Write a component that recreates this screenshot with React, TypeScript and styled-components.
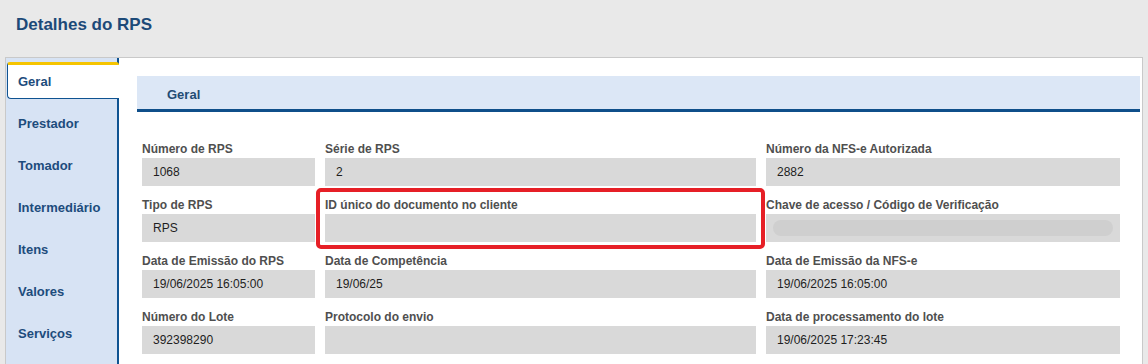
import styled, { createGlobalStyle } from 'styled-components';

type FieldData = {
  label: string;
  value?: string;
  redacted?: boolean;
  highlighted?: boolean;
};

const TABS = ['Geral', 'Prestador', 'Tomador', 'Intermediário', 'Itens', 'Valores', 'Serviços'];

const FIELDS: FieldData[] = [
  { label: 'Número de RPS', value: '1068' },
  { label: 'Série de RPS', value: '2' },
  { label: 'Número da NFS-e Autorizada', value: '2882' },
  { label: 'Tipo de RPS', value: 'RPS' },
  { label: 'ID único do documento no cliente', highlighted: true },
  { label: 'Chave de acesso / Código de Verificação', redacted: true },
  { label: 'Data de Emissão do RPS', value: '19/06/2025 16:05:00' },
  { label: 'Data de Competência', value: '19/06/25' },
  { label: 'Data de Emissão da NFS-e', value: '19/06/2025 16:05:00' },
  { label: 'Número do Lote', value: '392398290' },
  { label: 'Protocolo do envio' },
  { label: 'Data de processamento do lote', value: '19/06/2025 17:23:45' },
];

export default function App() {
  return (
    <>
      <GlobalStyle />
      <Page>
        <Title>Detalhes do RPS</Title>
        <Panel>
          <Sidebar>
            {TABS.map((tab, i) => (
              <Tab key={tab} $active={i === 0}>
                {tab}
              </Tab>
            ))}
          </Sidebar>
          <Content>
            <SectionHeader>Geral</SectionHeader>
            <FieldGrid>
              {FIELDS.map((f) => (
                <Field key={f.label}>
                  <Label>{f.label}</Label>
                  <ValueBox>
                    {f.redacted ? <Redacted /> : f.value}
                  </ValueBox>
                  {f.highlighted && <Highlight />}
                </Field>
              ))}
            </FieldGrid>
          </Content>
        </Panel>
      </Page>
    </>
  );
}

/*
 * Styles
 */

const GlobalStyle = createGlobalStyle`
  body {
    margin: 0;
    background-color: #e9e9e9;
    font-family: "Liberation Sans", Arial, sans-serif;
  }
`;

const Page = styled.div`
  height: 364px;
  overflow: hidden;
`;

const Title = styled.h1`
  margin: 0;
  height: 57px;
  box-sizing: border-box;
  padding: 15px 16px 0;
  font-size: 17px;
  line-height: 20px;
  font-weight: bold;
  color: #1c4a78;
`;

const Panel = styled.div`
  margin-left: 5px;
  width: 1138px;
  height: 400px;
  box-sizing: border-box;
  display: flex;
  background-color: #ffffff;
  border: 1px solid #c9c9c9;
  border-bottom: none;
`;

const Sidebar = styled.div`
  width: 113px;
  flex-shrink: 0;
  box-sizing: border-box;
  padding-top: 4px;
  display: flex;
  flex-direction: column;
  gap: 5px;
  background-color: #d7e3f4;
  border-right: 2px solid #0f5391;
`;

const Tab = styled.div<{ $active?: boolean }>`
  height: 37px;
  box-sizing: border-box;
  margin-left: 1px;
  margin-right: ${(p) => (p.$active ? '-2px' : '0')};
  padding-left: 10px;
  display: flex;
  align-items: center;
  font-size: 13px;
  font-weight: bold;
  color: #1d4c7c;
  background-color: ${(p) => (p.$active ? '#ffffff' : 'transparent')};
  border-top: 3px solid ${(p) => (p.$active ? '#f5c400' : 'transparent')};
  border-left: 1px solid ${(p) => (p.$active ? '#0f5391' : 'transparent')};
  border-bottom: 1px solid ${(p) => (p.$active ? '#0f5391' : 'transparent')};
  border-radius: 3px 3px 0 4px;
  position: relative;
  z-index: 1;
`;

const Content = styled.div`
  flex: 1;
  padding: 18px 2px 0 18px;
`;

const SectionHeader = styled.div`
  height: 36px;
  box-sizing: border-box;
  padding: 4px 0 0 30px;
  display: flex;
  align-items: center;
  font-size: 13px;
  font-weight: bold;
  color: #234c74;
  background-color: #dce7f6;
  border-bottom: 3px solid #0f4f8a;
`;

const FieldGrid = styled.div`
  margin: 29px 0 0 5px;
  display: grid;
  grid-template-columns: 173px 431px 354px;
  column-gap: 10px;
  row-gap: 11px;
`;

const Field = styled.div`
  position: relative;
  display: flex;
  flex-direction: column;
`;

const Label = styled.div`
  height: 17px;
  font-size: 12px;
  line-height: 17px;
  font-weight: bold;
  color: #4f4f4f;
  white-space: nowrap;
`;

const ValueBox = styled.div`
  height: 28px;
  box-sizing: border-box;
  padding: 0 7px 0 11px;
  display: flex;
  align-items: center;
  font-size: 12px;
  color: #1e1e1e;
  background-color: #d9d9d9;
`;

const Redacted = styled.div`
  flex: 1;
  height: 16px;
  margin-left: -4px;
  border-radius: 8px;
  background-color: #cfcfcf;
  filter: blur(0.6px);
`;

const Highlight = styled.div`
  position: absolute;
  top: -9px;
  left: -9px;
  right: -9px;
  bottom: -7px;
  border: 4px solid #e61f26;
  border-radius: 5px;
  pointer-events: none;
`;
